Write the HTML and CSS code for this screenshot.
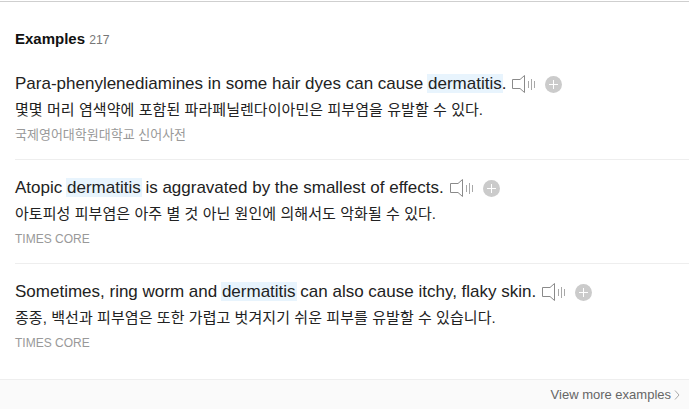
FILE: index.html
```html
<!DOCTYPE html>
<html lang="ko">
<head>
<meta charset="utf-8">
<title>Examples</title>
<link rel="stylesheet" href="styles.css">
</head>
<body>
<main class="panel">
  <h2 class="heading"><strong>Examples</strong> <span class="count">217</span></h2>
  <ul class="list">
    <li class="item">
      <p class="en"><span>Para-phenylenediamines in some hair dyes can cause <mark>dermatitis</mark>.</span><svg class="speaker" width="24" height="20" viewBox="0 0 24 20"><path d="M.500 5.500H8L12.500 1.500V18.500L8 14.500H.500Z" fill="none" stroke="#8a8a8a"/><path d="M16.500 7V14M19.500 5V16M22.500 7V14" stroke="#a8a8a8"/></svg><span class="plus"></span></p>
      <p class="ko">몇몇 머리 염색약에 포함된 파라페닐렌다이아민은 피부염을 유발할 수 있다.</p>
      <p class="src src-ko">국제영어대학원대학교 신어사전</p>
    </li>
    <li class="item">
      <p class="en"><span>Atopic <mark>dermatitis</mark> is aggravated by the smallest of effects.</span><svg class="speaker" width="24" height="20" viewBox="0 0 24 20"><path d="M.500 5.500H8L12.500 1.500V18.500L8 14.500H.500Z" fill="none" stroke="#8a8a8a"/><path d="M16.500 7V14M19.500 5V16M22.500 7V14" stroke="#a8a8a8"/></svg><span class="plus"></span></p>
      <p class="ko">아토피성 피부염은 아주 별 것 아닌 원인에 의해서도 악화될 수 있다.</p>
      <p class="src">TIMES CORE</p>
    </li>
    <li class="item">
      <p class="en"><span>Sometimes, ring worm and <mark>dermatitis</mark> can also cause itchy, flaky skin.</span><svg class="speaker" width="24" height="20" viewBox="0 0 24 20"><path d="M.500 5.500H8L12.500 1.500V18.500L8 14.500H.500Z" fill="none" stroke="#8a8a8a"/><path d="M16.500 7V14M19.500 5V16M22.500 7V14" stroke="#a8a8a8"/></svg><span class="plus"></span></p>
      <p class="ko">종종, 백선과 피부염은 또한 가렵고 벗겨지기 쉬운 피부를 유발할 수 있습니다.</p>
      <p class="src">TIMES CORE</p>
    </li>
  </ul>
  <footer class="more"><a class="more-link">View more examples<svg class="chev" width="6" height="10" viewBox="0 0 6 10"><path d="M1 .5L5 5L1 9.500" fill="none" stroke="#aaa"/></svg></a></footer>
</main>
</body>
</html>
```
FILE: styles.css
```css
html, body { margin: 0; padding: 0; background: #fff; }
body { font-family: "Liberation Sans", "Noto Sans CJK KR", sans-serif; width: 689px; height: 409px; overflow: hidden; }
.panel { border-top: 1px solid #cfcfcf; margin-top: 1px; display: flex; flex-direction: column; height: 407px; }
.heading { margin: 0; padding: 28px 0 0 15px; font-size: 15px; line-height: 18px; font-weight: normal; color: #111; }
.heading strong { font-weight: bold; }
.count { font-size: 12.200px; color: #777; }
.list { list-style: none; margin: 0; padding: 7px 0 0 15px; flex: 1; }
.item { border-bottom: 1px solid #eee; padding: 16px 0 15px; }
.item:last-child { border-bottom: 0; }
.en { margin: 0; display: flex; align-items: center; font-size: 17px; line-height: 24px; color: #222; white-space: pre-wrap; }
mark { background: #e8f4fd; color: inherit; padding: 0 1px; margin: 0 -1px; }
.speaker { margin-left: 6px; }
.plus { margin-left: 9px; width: 17px; height: 17px; border-radius: 50%; background: #cbcbcb; position: relative; }
.plus::before { content: ""; position: absolute; left: 4px; top: 8px; width: 9px; height: 1px; background: #fff; }
.plus::after { content: ""; position: absolute; left: 8px; top: 4px; width: 1px; height: 9px; background: #fff; }
.ko { margin: 4px 0 0; font-size: 15px; line-height: 20px; color: #222; letter-spacing: 0.070px; }
.src { margin: 6px 0 0; font-size: 12px; line-height: 18px; color: #999; }
.src-ko { font-size: 13px; }
.more { height: 29px; background: #fafafa; border-top: 1px solid #eee; display: flex; justify-content: flex-end; align-items: center; padding-right: 9px; }
.more-link { font-size: 13px; color: #666; display: flex; align-items: center; gap: 3px; }
```
